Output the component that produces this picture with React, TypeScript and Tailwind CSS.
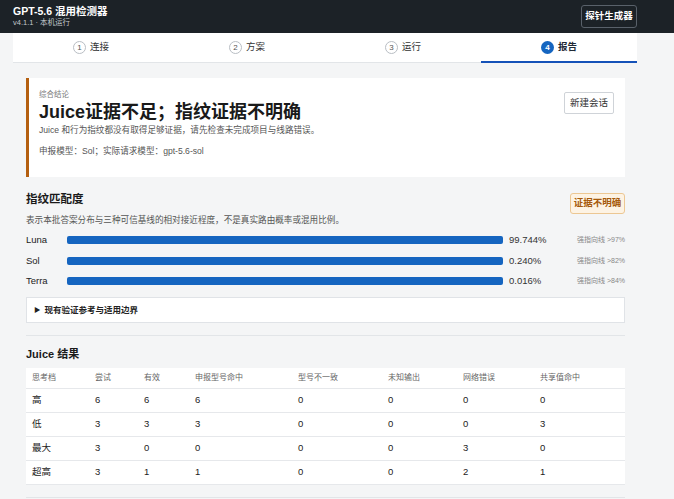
import React from "react";

const tabs = [
  { n: 1, label: "连接" },
  { n: 2, label: "方案" },
  { n: 3, label: "运行" },
  { n: 4, label: "报告" },
];

const bars = [
  { name: "Luna", value: "99.744%", hint: "强指向线 >97%" },
  { name: "Sol", value: "0.240%", hint: "强指向线 >82%" },
  { name: "Terra", value: "0.016%", hint: "强指向线 >84%" },
];

const headers = ["思考档", "尝试", "有效", "申报型号命中", "型号不一致", "未知输出", "网络错误", "共享值命中"];
const rows: (string | number)[][] = [
  ["高", 6, 6, 6, 0, 0, 0, 0],
  ["低", 3, 3, 3, 0, 0, 0, 3],
  ["最大", 3, 0, 0, 0, 0, 3, 0],
  ["超高", 3, 1, 1, 0, 0, 2, 1],
];

const gridCols = "grid grid-cols-[63px_49px_51px_103px_90px_75px_77px_91px]";

export default function App() {
  return (
    <div className="min-h-[499px] w-[674px] bg-[#f4f5f6] font-['Liberation_Sans','Noto_Sans_CJK_SC',sans-serif] text-[#222]">
      {/* Header */}
      <header className="h-[33px] bg-[#1c2227]">
        <div className="ml-[13px] flex h-full w-[624px] items-center justify-between">
          <div className="flex flex-col pb-[1px]">
            <div className="text-[10.5px] font-bold leading-[14px] text-white">GPT-5.6 混用检测器</div>
            <div className="text-[7.5px] leading-[10px] text-[#c3c8cd]">v4.1.1 · 本机运行</div>
          </div>
          <button className="h-[23px] w-[56px] rounded-[3px] border border-[#59616a] text-[9.5px] font-bold text-white">
            探针生成器
          </button>
        </div>
      </header>

      {/* Tabs */}
      <nav className="ml-[13px] flex h-[30px] w-[624px] border-b border-[#e2e5e8] bg-white">
        {tabs.map((t) => {
          const active = t.n === 4;
          return (
            <div key={t.n} className="relative flex flex-1 items-center justify-center gap-[4px]">
              <span
                className={
                  active
                    ? "flex h-[13px] w-[13px] items-center justify-center rounded-full bg-[#1565c0] text-[8px] font-bold text-white"
                    : "flex h-[13px] w-[13px] items-center justify-center rounded-full border border-[#b9bec4] text-[8px] text-[#555]"
                }
              >
                {t.n}
              </span>
              <span className={active ? "text-[9.5px] font-bold text-[#1f2a36]" : "text-[9.5px] text-[#333]"}>
                {t.label}
              </span>
              {active && <span className="absolute bottom-[-1px] left-0 right-0 h-[2px] bg-[#1552b8]" />}
            </div>
          );
        })}
      </nav>

      <main className="ml-[26px] w-[599px]">
        {/* Conclusion card */}
        <section className="mt-[15px] flex h-[99px] justify-between border-l-[3px] border-[#b45f10] bg-white pl-[10px] pr-[11px]">
          <div className="pt-[12px]">
            <div className="text-[7.5px] leading-[10px] text-[#777]">综合结论</div>
            <div className="mt-[1px] text-[18px] font-bold leading-[22px] text-[#1a1a1a]">Juice证据不足；指纹证据不明确</div>
            <div className="mt-[0.5px] text-[8.6px] leading-[12px] text-[#555]">
              Juice 和行为指纹都没有取得足够证据，请先检查未完成项目与线路错误。
            </div>
            <div className="mt-[9.5px] text-[8.6px] leading-[12px] text-[#555]">申报模型：Sol；实际请求模型：gpt-5.6-sol</div>
          </div>
          <div className="pt-[11px]">
            <button className="h-[22px] w-[50px] rounded-[2px] border border-[#cfd3d8] bg-white text-[9.5px] text-[#333]">
              新建会话
            </button>
          </div>
        </section>

        {/* Fingerprint */}
        <section className="mt-[16px] border-b border-[#e2e5e8] pb-[12px]">
          <div className="flex items-start justify-between">
            <h2 className="text-[11.5px] font-bold leading-[12px] text-[#1a1a1a]">指纹匹配度</h2>
            <span className="flex h-[21px] w-[55px] items-center justify-center rounded-[3px] border border-[#ecc793] bg-[#fdf3e4] text-[9.5px] font-bold text-[#a65a0b]">
              证据不明确
            </span>
          </div>
          <p className="text-[8.6px] leading-[12px] text-[#555]">
            表示本批答案分布与三种可信基线的相对接近程度，不是真实路由概率或混用比例。
          </p>
          <div className="mt-[4px]">
            {bars.map((b) => (
              <div key={b.name} className="grid h-[20.5px] grid-cols-[41px_436px_1fr_auto] items-center">
                <span className="text-[9.5px] font-medium text-[#222]">{b.name}</span>
                <div className="h-[8px] rounded-[2px] bg-[#1565c0]" />
                <span className="pl-[6px] text-[9.5px] text-[#333]">{b.value}</span>
                <span className="text-[7px] text-[#888]">{b.hint}</span>
              </div>
            ))}
          </div>
          <div className="mt-[5.5px] flex h-[26px] items-center border border-[#e0e3e7] bg-white pl-[7px]">
            <span className="mr-[4px] text-[6.5px] text-[#222]">▶</span>
            <span className="text-[8.5px] font-bold text-[#222]">现有验证参考与适用边界</span>
          </div>
        </section>

        {/* Juice results */}
        <section className="border-b border-[#e2e5e8] pb-[12px] pt-[11px]">
          <h2 className="text-[11px] font-bold leading-[14px] text-[#1a1a1a]">Juice 结果</h2>
          <div className="mt-[7px] bg-white">
            <div className={`${gridCols} h-[21px] items-center border-b border-[#e6e8eb]`}>
              {headers.map((h) => (
                <span key={h} className="pl-[6px] text-[8px] text-[#666]">
                  {h}
                </span>
              ))}
            </div>
            {rows.map((r) => (
              <div key={String(r[0])} className={`${gridCols} h-[24px] items-center border-b border-[#e6e8eb]`}>
                {r.map((c, i) => (
                  <span key={i} className="pl-[6px] text-[9.5px] text-[#222]">
                    {c}
                  </span>
                ))}
              </div>
            ))}
          </div>
        </section>
      </main>
    </div>
  );
}
